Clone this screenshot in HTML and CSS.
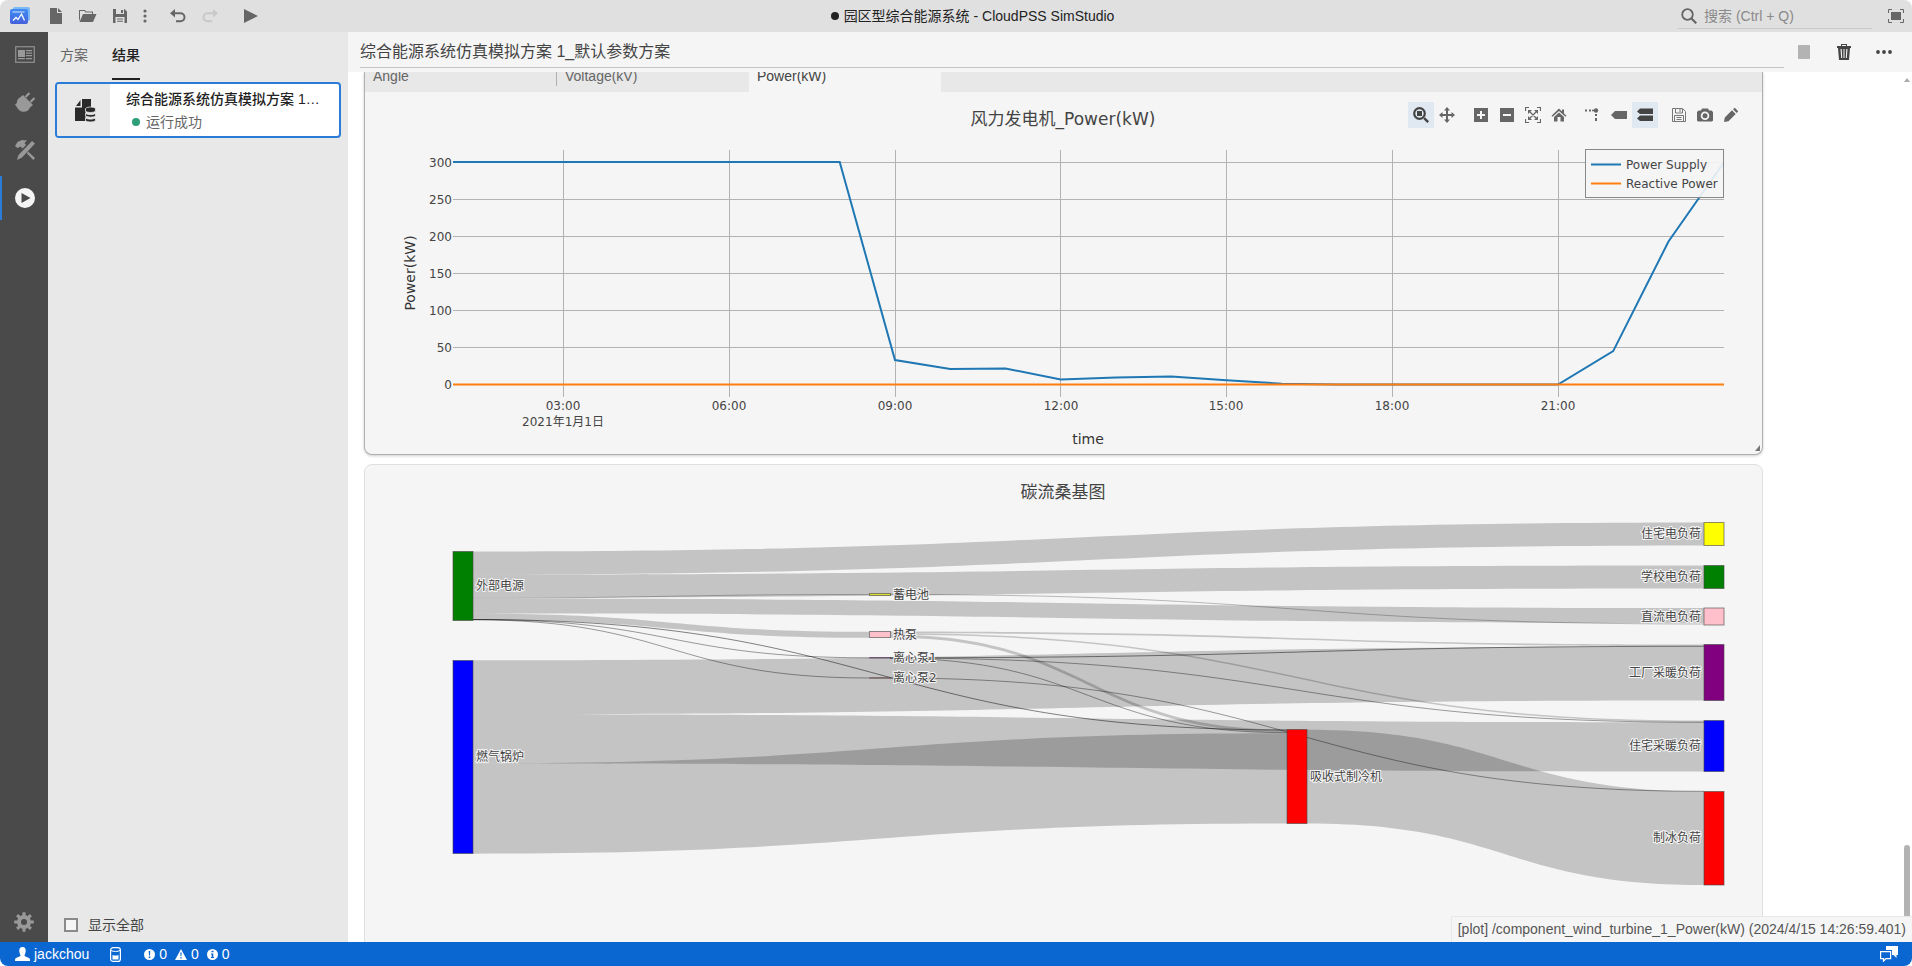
FILE: index.html
```html
<!DOCTYPE html>
<html lang="zh-CN">
<head>
<meta charset="utf-8">
<title>园区型综合能源系统 - CloudPSS SimStudio</title>
<link rel="stylesheet" href="styles.css">
</head>
<body>
<div class="app">
  <header class="topbar">
    <div class="tools">
      <svg class="logo" width="22" height="18" viewBox="0 0 22 18" aria-hidden="true">
        <defs>
          <linearGradient id="logo-front" x1="0" y1="0" x2="0" y2="1"><stop offset="0" stop-color="#3f8cf2"/><stop offset="1" stop-color="#4560dc"/></linearGradient>
        </defs>
        <rect x="3" y="0" width="17" height="14" rx="2" fill="#7cb8f6"/>
        <rect x="0" y="2" width="18" height="15" rx="2" fill="url(#logo-front)"/>
        <path d="M2.500 5h12" stroke="#fff" stroke-width="1" opacity=".8"/>
        <path d="M3 13.500l3-3 2 2 3.500-5.500 3 6.500" fill="none" stroke="#fff" stroke-width="1.300"/>
      </svg>
      <button class="tool" aria-label="新建"><svg width="16" height="16" viewBox="0 0 16 16"><path d="M2 0h7v5h5v11H2zM10 0l4 4h-4z"/></svg></button>
      <button class="tool wide" aria-label="打开"><svg width="18" height="16" viewBox="0 0 18 16"><path d="M0 13V2h6l1 1.500h7V6h-1V4.500H6.500L5.500 3H1v8zM4 6h13.500L14 14H.5z"/></svg></button>
      <button class="tool" aria-label="保存"><svg width="16" height="16" viewBox="0 0 16 16"><path fill-rule="evenodd" d="M1 1h11.500L15 3.500V15H1zM4 1v5h8V1zM9 2h2v3H9zM3.500 9v6h9V9zM5 10.500h6v1H5zM5 12.700h6v1H5z"/></svg></button>
      <button class="tool slim" aria-label="更多"><svg width="4" height="14" viewBox="0 0 4 14"><circle cx="2" cy="2" r="1.600"/><circle cx="2" cy="7" r="1.600"/><circle cx="2" cy="12" r="1.600"/></svg></button>
      <button class="tool undo" aria-label="撤销"><svg width="16" height="14" viewBox="0 0 16 14"><path d="M5 0v3.200h5.500a5 5 0 0 1 0 10H6v-2h4.500a3 3 0 0 0 0-6H5v3.300L0 4.300z"/></svg></button>
      <button class="tool redo" aria-label="重做" disabled><svg width="16" height="14" viewBox="0 0 16 14"><path d="M11 0v3.200H5.500a5 5 0 0 0 0 10H10v-2H5.500a3 3 0 0 1 0-6H11v3.300l5-4.200z"/></svg></button>
      <button class="tool run" aria-label="运行"><svg width="14" height="16" viewBox="0 0 14 16"><path d="M0 1l14 7-14 7z"/></svg></button>
    </div>
    <div class="doc-title"><span class="dirty"></span>园区型综合能源系统 - CloudPSS SimStudio</div>
    <label class="search">
      <svg width="16" height="16" viewBox="0 0 16 16"><circle cx="6.500" cy="6.500" r="5.300" fill="none" stroke="#666" stroke-width="1.800"/><path d="M10.500 10.500l4.800 4.800" stroke="#666" stroke-width="2.200"/></svg>
      <input type="text" placeholder="搜索 (Ctrl + Q)" aria-label="搜索">
    </label>
    <button class="fullscreen" aria-label="全屏"><svg width="16" height="14" viewBox="0 0 16 14"><path d="M.5 4V.5H4M12 .5h3.500V4M15.500 10v3.500H12M4 13.500H.5V10" fill="none" stroke="#666"/><rect x="3" y="3" width="10" height="8" fill="#666"/></svg></button>
  </header>

  <div class="body">
    <nav class="rail">
      <button class="rail-item" aria-label="总览"><svg width="20" height="17" viewBox="0 0 20 17"><rect x=".7" y=".7" width="18.600" height="15.600" fill="none" stroke="#8c8c8c" stroke-width="1.300"/><path d="M3 4h7v7H3zM11 4h6v1.300h-6zM11 6.500h6v1.300h-6zM11 9h6v1.300h-6zM3 12h7v1.300H3zM11 12h6v1.300h-6z"/></svg></button>
      <button class="rail-item" aria-label="接口"><svg width="20" height="20" viewBox="0 0 20 20"><path d="M5 5.500L8 3l10 10-3 2.500c-1 3-4 4.500-7 4.200-2-.2-3.500-1-4.500-2.200S1 14 0 12.500C1.500 11.500 2 11 2 10c0-2 1-3.500 3-4.500z"/><path d="M10.500 5L14.500 1M15.500 10l4-4" stroke="#999" stroke-width="2.200"/></svg></button>
      <button class="rail-item" aria-label="工具"><svg width="20" height="20" viewBox="0 0 20 20"><path d="M0 6l2.500-4L7 0l5 .5-2.500 2.500 1.500 2-3.500 3.500-2-2-3 1.500zM17 1l3 2.500L7 17.500 2 20l1.500-5zM13 11.500L20 18l-1.700 2-6.300-6.500z"/></svg></button>
      <button class="rail-item active" aria-label="运行"><svg width="20" height="20" viewBox="0 0 20 20"><path fill-rule="evenodd" d="M10 0a10 10 0 1 1 0 20 10 10 0 0 1 0-20zM6.500 5v10l9-5z"/></svg></button>
      <button class="rail-item settings" aria-label="设置"><svg width="20" height="20" viewBox="0 0 20 20"><circle cx="10" cy="10" r="5" fill="none" stroke="#999" stroke-width="4"/><path d="M10 .2v4M10 15.800v4M.2 10h4M15.800 10h4M3.100 3.100l2.800 2.800M14.100 14.100l2.800 2.800M3.100 16.900l2.800-2.800M14.100 5.900l2.800-2.800" stroke="#999" stroke-width="3"/></svg></button>
    </nav>

    <aside class="panel">
      <div class="panel-tabs">
        <button class="panel-tab">方案</button>
        <button class="panel-tab selected">结果</button>
      </div>
      <button class="result">
        <span class="result-icon"><svg width="21" height="24" viewBox="0 0 21 24"><path d="M7 0h9v9l-3.500 1L10.500 12v10H0V8.500h7zM5.500 1v6H1z"/><path d="M10.500 9.500c2-2 8-2 10 0v2.800c-2 1.600-8 1.600-10 0zM10.500 14.500c2 1.500 8 1.500 10 0V17c-2 1.600-8 1.600-10 0zM10.500 19c2 1.500 8 1.500 10 0v2.700c-2 1.700-8 1.700-10 0z" stroke="#e8e8e8" stroke-width=".8"/></svg></span>
        <span class="result-text">
          <span class="result-name">综合能源系统仿真模拟方案 1_默认参数方案</span>
          <span class="result-state"><span class="dot"></span>运行成功</span>
        </span>
      </button>
      <label class="show-all"><input type="checkbox">显示全部</label>
    </aside>

    <main class="main">
      <div class="main-head">
        <input class="name" type="text" value="综合能源系统仿真模拟方案 1_默认参数方案" aria-label="结果名称">
        <div class="actions">
          <button aria-label="停止" disabled><svg width="12" height="14" viewBox="0 0 12 14"><path d="M0 0h12v14H0z" fill="#b3b3b3"/></svg></button>
          <button aria-label="删除"><svg width="14" height="16" viewBox="0 0 14 16"><path fill-rule="evenodd" d="M4 0h6v2h4v2h-1l-1 12H2L1 4H0V2h4zM5 1v1h4V1zM3.500 5l.7 9h1L4.700 5zM6.500 5v9h1V5zM9.300 5l-.5 9h1l.7-9z"/></svg></button>
          <button aria-label="更多"><svg width="16" height="4" viewBox="0 0 16 4"><circle cx="2" cy="2" r="1.900"/><circle cx="8" cy="2" r="1.900"/><circle cx="14" cy="2" r="1.900"/></svg></button>
        </div>
      </div>

      <div class="canvas">
        <section class="card focused">
          <div class="card-tabs">
            <button class="card-tab">Angle</button>
            <button class="card-tab">Voltage(kV)</button>
            <button class="card-tab selected">Power(kW)</button>
          </div>
          <div class="plot">
            <div class="modebar">
              <div class="group">
                <button class="on" aria-label="缩放"><svg width="16" height="16" viewBox="0 0 16 16"><circle cx="6.500" cy="6.500" r="5.300" fill="none" stroke="#444" stroke-width="2.200"/><path d="M4 4h5v5H4zM10.300 12l1.700-1.700 4 4-1.700 1.700z"/></svg></button>
                <button aria-label="平移"><svg width="16" height="16" viewBox="0 0 16 16"><path d="M8 0l3 3.500H9V7h3.500V5L16 8l-3.500 3V9H9v3.500h2L8 16l-3-3.500h2V9H3.500v2L0 8l3.500-3v2H7V3.500H5z"/></svg></button>
              </div>
              <div class="group">
                <button aria-label="放大"><svg width="16" height="16" viewBox="0 0 16 16"><path fill-rule="evenodd" d="M1 1h14v14H1zM7 4v3H4v2h3v3h2V9h3V7H9V4z"/></svg></button>
                <button aria-label="缩小"><svg width="16" height="16" viewBox="0 0 16 16"><path fill-rule="evenodd" d="M1 1h14v14H1zM4 7v2h8V7z"/></svg></button>
                <button aria-label="自动缩放"><svg width="16" height="16" viewBox="0 0 16 16"><path d="M.5 4V.5H4M12 .5h3.500V4M15.500 12v3.500H12M4 15.500H.5V12M4 4l8 8M12 4l-8 8" fill="none" stroke="#666" stroke-width="1.200"/><path d="M3 3h4L3 7zM13 3v4L9 3zM13 13H9l4-4zM3 13V9l4 4z"/></svg></button>
                <button aria-label="重置"><svg width="16" height="16" viewBox="0 0 16 16"><path d="M8 1.500l3 3V2.500h2v4l2.500 2.300-1 1L8 4l-6.500 5.800-1-1zM8 5.500l5 4.500v4.500H9.500V10h-3v4.500H3V10z"/></svg></button>
              </div>
              <div class="group">
                <button aria-label="参考线"><svg width="16" height="16" viewBox="0 0 16 16"><path d="M0 2.500h2v2H0zM4 2.500h2v2H4zM10 7h2v2h-2zM10 11h2v3h-2zM7 2.700h3v1.500H7z"/><circle cx="11" cy="3.500" r="2.200"/></svg></button>
                <button aria-label="最近数据"><svg width="16" height="16" viewBox="0 0 16 16"><path d="M0 8l4-4h12v8H4z"/></svg></button>
                <button class="on" aria-label="对比数据"><svg width="16" height="16" viewBox="0 0 16 16"><path d="M0 4.500l3-3h13v5.500H3zM0 11.500l3-3h13V14H3z"/></svg></button>
              </div>
              <div class="group">
                <button aria-label="保存"><svg width="16" height="16" viewBox="0 0 16 16"><path d="M1.500 1.500h10l3 3v10h-13zM4.500 1.500v4.500h7V2M3.500 14.500v-6h9v6M9 2v3M5.500 10.500h5M5.500 12.500h5" fill="none" stroke="#777"/></svg></button>
                <button aria-label="截图"><svg width="16" height="16" viewBox="0 0 16 16"><path fill-rule="evenodd" d="M5 1.500h6l1 2h2.500L16 5v8.500l-1 1H1l-1-1V5l1.500-1.500H4zM8 4.500a4.300 4.300 0 1 0 0 8.600 4.300 4.300 0 0 0 0-8.600zM8 6.300a2.500 2.500 0 1 1 0 5 2.500 2.500 0 0 1 0-5z"/></svg></button>
                <button aria-label="编辑"><svg width="16" height="16" viewBox="0 0 16 16"><path d="M1 15l.8-4.500L9 3.300l3.700 3.700-7.200 7.200zM10 2.300L11.800.8 15.200 4.200 13.700 6z"/></svg></button>
              </div>
            </div>
            <svg class="chart" viewBox="365 92 1397 362" role="img" aria-label="风力发电机_Power(kW)">
              <text class="chart-title" x="1063" y="125">风力发电机_Power(kW)</text>
              <path class="grid" d="M453 162.500H1724M453 199.500H1724M453 236.500H1724M453 273.500H1724M453 310.500H1724M453 347.500H1724M563.500 150V397M729.500 150V397M895.500 150V397M1060.500 150V397M1226.500 150V397M1392.500 150V397M1558.500 150V397"/>
              <g class="tick end">
                <text x="452" y="167">300</text><text x="452" y="204">250</text><text x="452" y="241">200</text><text x="452" y="278">150</text><text x="452" y="315">100</text><text x="452" y="352">50</text><text x="452" y="389">0</text>
              </g>
              <g class="tick mid">
                <text x="563" y="410">03:00</text><text x="563" y="426">2021年1月1日</text><text x="729" y="410">06:00</text><text x="895" y="410">09:00</text><text x="1061" y="410">12:00</text><text x="1226" y="410">15:00</text><text x="1392" y="410">18:00</text><text x="1558" y="410">21:00</text>
              </g>
              <path class="trace supply" d="M453 162.100H839.700L895 360.100 950.200 369 1005.500 368.500 1060.700 379.500 1116 377.400 1171.200 376.500 1226.500 380.300 1281.700 383.700 1337 384.500H1558L1613.200 351.100 1668.500 241.500 1723.500 163"/>
              <path class="trace reactive" d="M453 384.500H1724"/>
              <text class="axis-title" transform="translate(415 273) rotate(-90)">Power(kW)</text>
              <text class="axis-title" x="1088" y="444">time</text>
              <rect class="legend-box" x="1585.500" y="149.500" width="138" height="48"/>
              <path class="trace supply" d="M1591 164.500h30"/>
              <path class="trace reactive" d="M1591 183.500h30"/>
              <g class="legend-text"><text x="1626" y="169">Power Supply</text><text x="1626" y="188">Reactive Power</text></g>
              <path d="M1760 445v6h-5z" fill="#777"/>
            </svg>
          </div>
        </section>

        <section class="card">
          <svg class="chart" viewBox="365 465 1397 520" role="img" aria-label="碳流桑基图">
            <text class="chart-title" x="1063" y="498">碳流桑基图</text>
            <g class="link">
              <path d="M473 551.500C1088 551.500 1088 522.500 1704 522.500V545.500C1088 545.500 1088 574.500 473 574.500Z"/>
              <path d="M473 574.500C1088 574.500 1088 565.500 1704 565.500V588.500C1088 588.500 1088 597.500 473 597.500Z"/>
              <path d="M473 598.500C1088 598.500 1088 608 1704 608V623C1088 623 1088 613.500 473 613.500Z"/>
              <path d="M473 613.500C671 613.500 671 631.700 869 631.700V637.700C671 637.700 671 619.500 473 619.500Z"/>
              <path d="M473 660.300C1088 660.300 1088 646.500 1704 646.500V700.500C1088 700.500 1088 714.300 473 714.300Z"/>
              <path d="M473 714.300C1088 714.300 1088 722.300 1704 722.300V771.500C1088 771.500 1088 763.500 473 763.500Z"/>
              <path d="M473 763.500C880 763.500 880 733.300 1287 733.300V823.500C880 823.500 880 853.700 473 853.700Z"/>
              <path d="M1307 729.700C1505.500 729.700 1505.500 791.500 1704 791.500V885C1505.500 885 1505.500 823.500 1307 823.500Z"/>
              <path d="M890 631.500C1297 631.500 1297 644.500 1704 644.500V646.200C1297 646.200 1297 633.200 890 633.200Z"/>
              <path d="M890 633.200C1297 633.200 1297 720.500 1704 720.500V722C1297 722 1297 634.700 890 634.700Z"/>
              <path d="M890 634.700C1088.500 634.700 1088.500 729.500 1287 729.500V732.500C1088.500 732.500 1088.500 637.700 890 637.700Z"/>
            </g>
            <g class="thin soft">
              <path d="M473 598C671 598 671 594.500 869 594.500"/>
              <path d="M890 594.500C1297 594.500 1297 624 1704 624"/>
            </g>
            <g class="thin">
              <path d="M473 619.500C671 619.500 671 657.800 869 657.800"/>
              <path d="M473 619.800C671 619.800 671 678 869 678"/>
              <path class="strong" d="M473 619.500C880 619.500 880 730 1287 730"/>
              <path class="strong" d="M890 657.800C1297 657.800 1297 646.300 1704 646.300"/>
              <path d="M890 658C1297 658 1297 722.300 1704 722.300"/>
              <path d="M890 658.300C1088.500 658.300 1088.500 732.700 1287 732.700"/>
              <path d="M890 678C1297 678 1297 791.300 1704 791.300"/>
            </g>
            <g class="node">
              <rect x="453" y="551.500" width="20" height="69" fill="green"/>
              <rect x="453" y="660.500" width="20" height="193" fill="blue"/>
              <rect x="869.500" y="593.500" width="21" height="2" fill="#dd3"/>
              <rect x="869.500" y="631.500" width="21" height="6" fill="pink"/>
              <rect x="869.500" y="657.500" width="21" height=".6" fill="purple"/>
              <rect x="869.500" y="677.700" width="21" height=".5" fill="brown"/>
              <rect x="1287" y="729.500" width="20" height="94" fill="red"/>
              <rect x="1704" y="522.500" width="20" height="23" fill="yellow"/>
              <rect x="1704" y="565.500" width="20" height="23" fill="green"/>
              <rect x="1704" y="608" width="20" height="17" fill="pink"/>
              <rect x="1704" y="644.500" width="20" height="56" fill="purple"/>
              <rect x="1704" y="720.500" width="20" height="51" fill="blue"/>
              <rect x="1704" y="791.500" width="20" height="93.500" fill="red"/>
            </g>
            <g class="label">
              <text x="476" y="590">外部电源</text><text x="476" y="761">燃气锅炉</text>
              <text x="893" y="599">蓄电池</text><text x="893" y="639">热泵</text><text x="893" y="662">离心泵1</text><text x="893" y="682">离心泵2</text>
              <text x="1310" y="781">吸收式制冷机</text>
            </g>
            <g class="label end">
              <text x="1701" y="538">住宅电负荷</text><text x="1701" y="581">学校电负荷</text><text x="1701" y="621">直流电负荷</text><text x="1701" y="677">工厂采暖负荷</text><text x="1701" y="750">住宅采暖负荷</text><text x="1701" y="842">制冰负荷</text>
            </g>
          </svg>
        </section>
        <div class="scroll-up"></div>
        <div class="scroll-thumb"></div>
        <output class="log">[plot] /component_wind_turbine_1_Power(kW) (2024/4/15 14:26:59.401)</output>
      </div>
    </main>
  </div>

  <footer class="status">
    <button class="user"><svg width="15" height="14" viewBox="0 0 15 14"><path d="M7.500 0C10 0 11 2 10.700 4.500 10.500 6.500 9.500 7.500 9.500 9L14 11c1 .5 1 1.500 1 3H0c0-1.500 0-2.500 1-3l4.500-2c0-1.500-1-2.500-1.200-4.500C4 2 5 0 7.500 0z"/></svg>jackchou</button>
    <button aria-label="存储"><svg width="11" height="15" viewBox="0 0 11 15"><rect x=".6" y=".6" width="9.800" height="13.800" rx="2.500" fill="none" stroke="#fff" stroke-width="1.200"/><path d="M1 3.500c2 1.300 7 1.300 9 0" fill="none" stroke="#fff"/><path d="M2.500 8c2 .8 4 .8 6 0v4.500h-6z"/></svg></button>
    <button class="counts">
      <svg width="11" height="11" viewBox="0 0 11 11"><path fill-rule="evenodd" d="M5.500 0a5.500 5.500 0 1 1 0 11 5.500 5.500 0 0 1 0-11zM4.700 2l.3 4.500h1L6.300 2zM4.700 7.500v1.600h1.600V7.500z"/></svg><span>0</span>
      <svg width="12" height="11" viewBox="0 0 12 11"><path fill-rule="evenodd" d="M6 0l6 11H0zM5.300 3.500l.3 3.800h.8l.3-3.800zM5.300 8.200v1.300h1.400V8.200z"/></svg><span>0</span>
      <svg width="11" height="11" viewBox="0 0 11 11"><path fill-rule="evenodd" d="M5.500 0a5.500 5.500 0 1 1 0 11 5.500 5.500 0 0 1 0-11zM4.500 1.700v1.600h2V1.700zM4 4.500v1h.7V8H4v1h3V8h-.7V4.500z"/></svg><span>0</span>
    </button>
    <button class="chat" aria-label="消息"><svg width="18" height="16" viewBox="0 0 18 16"><path d="M6 0h12v9h-1.500v3l-3-3H12V4H6z"/><path d="M.6 5.600h10v7H6l-2.500 2.500v-2.500H.6z" fill="none" stroke="#fff" stroke-width="1.200"/></svg></button>
  </footer>
</div>
</body>
</html>
```
FILE: styles.css
```css
* { box-sizing: border-box; }

body {
  margin: 0;
  background: #fff;
  color: #333;
  font: 14px/20px "Liberation Sans", "Noto Sans CJK SC", sans-serif;
}

button {
  display: flex;
  align-items: center;
  justify-content: center;
  margin: 0;
  padding: 0;
  border: 0;
  background: none;
  color: inherit;
  font: inherit;
}

input { font: inherit; color: inherit; }
svg { display: block; flex: none; }

.app { display: flex; flex-direction: column; height: 100vh; overflow: hidden; }

/* top bar */
.topbar {
  display: flex;
  align-items: center;
  flex: none;
  height: 32px;
  padding: 0 8px 0 10px;
  background: #e0e0e0;
  border-radius: 8px 8px 0 0;
}
.tools { display: flex; align-items: center; fill: #666; }
.tool { width: 32px; height: 32px; }
.logo { margin-right: 8px; }
.tool.slim { width: 18px; }
.tool.undo { margin-left: 8px; }
.tool.redo { fill: #c8c8c8; }
.tool.run { margin-left: 9px; }
.doc-title { display: flex; align-items: center; justify-content: center; flex: 1; gap: 5px; color: #222; }
.dirty { width: 8px; height: 8px; border-radius: 50%; background: #222; }
.search {
  display: flex;
  align-items: center;
  gap: 7px;
  width: 194px;
  height: 26px;
  margin: 0 16px 0 0;
  padding-left: 3px;
  border-bottom: 1px solid #c8c8c8;
}
.search input { flex: 1; min-width: 0; padding: 0; border: 0; background: none; }
.search input::placeholder { color: #8a8a8a; opacity: 1; }

/* icon rail */
.body { display: flex; flex: 1; min-height: 0; }
.rail { display: flex; flex-direction: column; gap: 4px; flex: none; width: 48px; padding-bottom: 2px; background: #4a4a4a; fill: #999; }
.rail-item { width: 48px; height: 44px; padding-left: 2px; }
.rail-item.active { padding-left: 0; border-left: 2px solid #2b7cd9; fill: #f5f5f5; }
.rail-item.settings { margin-top: auto; height: 36px; padding: 0; }

/* side panel */
.panel { display: flex; flex-direction: column; flex: none; width: 300px; padding: 0 7px; background: #e8e8e8; }
.panel-tabs { display: flex; gap: 24px; height: 48px; padding: 0 5px; }
.panel-tab { height: 48px; border-bottom: 2px solid transparent; color: #666; }
.panel-tab.selected { border-color: #222; color: #222; font-weight: 500; }
.result { justify-content: flex-start; align-items: stretch; height: 56px; margin-top: 2px; border: 2px solid #2b7cd9; border-radius: 4px; background: #fff; overflow: hidden; text-align: left; }
.result-icon { display: flex; align-items: center; justify-content: center; flex: none; width: 53px; padding: 2px 0 0 4px; background: #e8e8e8; fill: #2a2a2a; }
.result-text { display: flex; flex-direction: column; justify-content: center; gap: 3px; min-width: 0; padding: 1px 18px 0 16px; }
.result-name { overflow: hidden; white-space: nowrap; text-overflow: ellipsis; color: #222; font-weight: 500; }
.result-state { display: flex; align-items: center; gap: 6px; padding-left: 6px; color: #666; }
.dot { width: 8px; height: 8px; border-radius: 50%; background: #2e9e78; }
.show-all { display: flex; align-items: center; gap: 10px; margin: auto 0 7px; padding-left: 9px; color: #444; }
.show-all input { appearance: none; width: 14px; height: 14px; margin: 0; border: 2px solid #8a8a8a; background: #f5f5f5; }

/* result page */
.main { display: flex; flex-direction: column; flex: 1; min-width: 0; background: #fff; }
.main-head { display: flex; flex: none; height: 40px; padding: 0 8px 4px 12px; background: #f5f5f5; }
.name { flex: 1; min-width: 0; padding: 4px 0 0; border: 0; border-bottom: 1px solid #c4c4c4; background: none; color: #444; font-size: 16px; }
.actions { display: flex; align-items: center; margin-top: 4px; fill: #444; }
.actions button { width: 40px; height: 32px; }
.canvas { position: relative; display: flex; flex-direction: column; gap: 9px; flex: 1; min-height: 0; padding: 0 149px 0 16px; overflow: hidden; }
.card { flex: none; border: 1px solid #e0e0e0; border-radius: 8px; background: #f5f5f5; }
.card.focused { border-color: #b0b0b0; border-top: 0; border-radius: 0 0 8px 8px; box-shadow: 0 1px 3px rgba(0, 0, 0, .2); }
.card-tabs { display: flex; height: 32px; margin-top: -12px; background: #e8e8e8; color: #666; }
.card-tab { position: relative; justify-content: flex-start; width: 192px; padding: 0 8px; }
.card-tab:first-child::after { content: ""; position: absolute; right: 0; bottom: 6px; height: 20px; border-right: 1px solid #b0b0b0; }
.card-tab.selected { background: #f5f5f5; color: #444; }

/* charts */
.plot { position: relative; }
.modebar { position: absolute; top: 10px; right: 18px; display: flex; gap: 8px; fill: #666; }
.group { display: flex; }
.group button { width: 26px; height: 26px; }
.group .on { background: #e0e8f2; fill: #444; }
.chart { width: 100%; height: auto; font-family: "DejaVu Sans", "Noto Sans CJK SC", sans-serif; }
.chart-title { font-size: 17px; fill: #444; text-anchor: middle; }
.axis-title { font-size: 14px; fill: #333; text-anchor: middle; }
.tick, .legend-text { font-size: 12px; fill: #444; }
.end { text-anchor: end; }
.mid { text-anchor: middle; }
.grid { fill: none; stroke: #b3b3b3; }
.trace { fill: none; stroke-width: 2; }
.supply { stroke: #1f77b4; }
.reactive { stroke: #ff7f0e; }
.legend-box { fill: #f5f5f5; fill-opacity: .9; stroke: #888; }
.link { fill: #000; fill-opacity: .2; }
.thin { fill: none; stroke: #000; stroke-opacity: .38; stroke-width: 1; }
.thin.soft { stroke-opacity: .25; }
.thin .strong { stroke-opacity: .48; }
.node { stroke: #444; stroke-opacity: .6; stroke-width: 1; }
.label { font-size: 12px; fill: #444; stroke: #f5f5f5; stroke-width: 2; paint-order: stroke; }

/* overlays of the result page */
.scroll-up { position: absolute; top: 6px; right: 2px; border: 3px solid transparent; border-top: 0; border-bottom: 4px solid #aaa; }
.scroll-thumb { position: absolute; right: 2px; bottom: 0; width: 6px; height: 97px; border-radius: 3px 3px 0 0; background: #b3b3b3; }
.log { position: absolute; right: 0; bottom: 0; padding: 2px 6px 3px; border: 1px solid #e8e8e8; border-width: 1px 0 0 1px; background: #f5f5f5; color: #555; white-space: nowrap; }

/* status bar */
.status { display: flex; align-items: center; gap: 21px; flex: none; height: 24px; padding: 0 14px 0 15px; border-radius: 0 0 8px 8px; background: #0a66d0; color: #fff; fill: #fff; }
.user { gap: 4px; }
.counts { gap: 4px; margin-left: 2px; }
.counts span { margin-right: 4px; }
.chat { margin-left: auto; }
```
